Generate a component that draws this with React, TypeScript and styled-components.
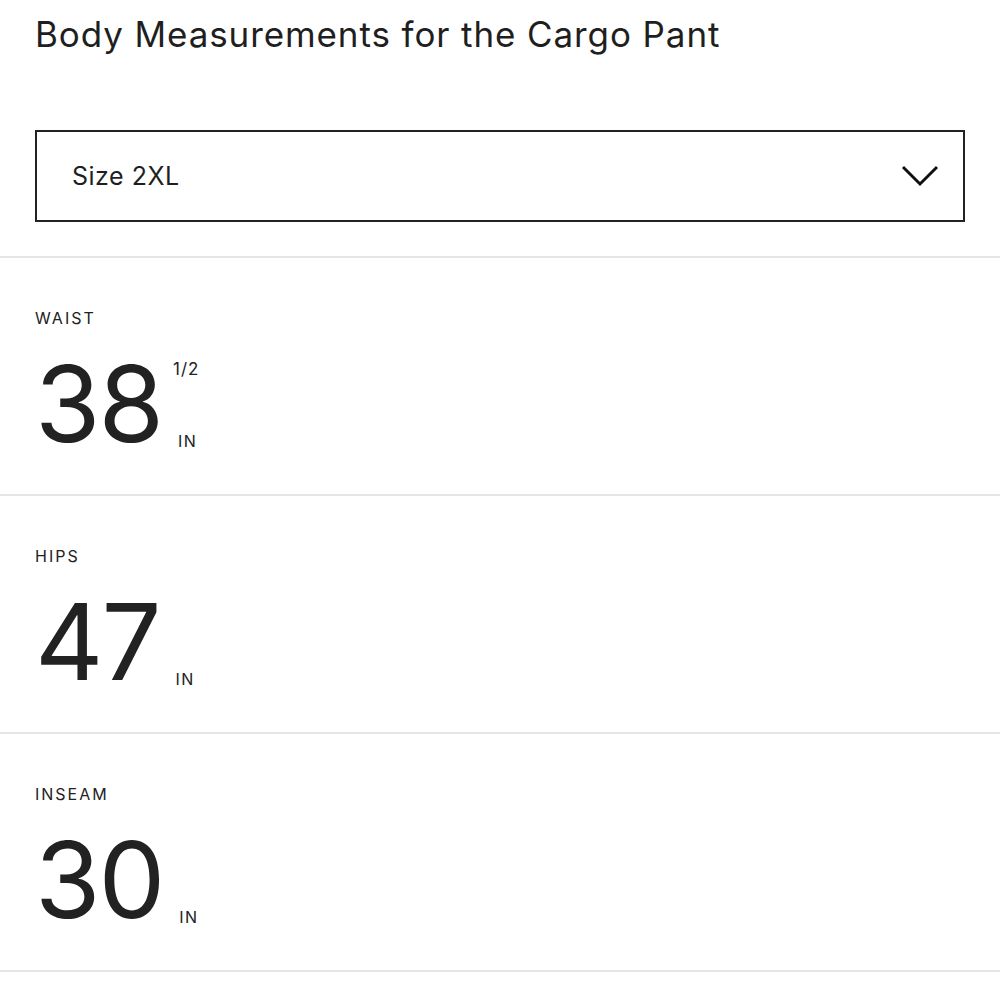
import React from "react";
import styled, { createGlobalStyle } from "styled-components";

const GlobalStyle = createGlobalStyle`
  html, body {
    margin: 0;
    padding: 0;
    background: #ffffff;
  }
  body {
    font-family: "Inter", "Liberation Sans", sans-serif;
    color: #1f1f1f;
  }
`;

const Page = styled.div`
  width: 1000px;
  display: flex;
  flex-direction: column;
`;

const Title = styled.h1`
  margin: 12px 0 0 35px;
  font-size: 35px;
  font-weight: 400;
  line-height: 44px;
  letter-spacing: 0.9px;
  color: #1f1f1f;
`;

const Select = styled.div`
  margin: 74px 35px 0 35px;
  height: 88px;
  border: 2px solid #222;
  display: flex;
  align-items: center;
  justify-content: space-between;
  padding: 0 24px 0 35px;
`;

const SelectLabel = styled.span`
  font-size: 25px;
  letter-spacing: 0.5px;
  color: #1f1f1f;
`;

const Spacer = styled.div`
  height: 34px;
`;

const Divider = styled.div`
  height: 2px;
  background: #e6e6e6;
`;

const Section = styled.section`
  padding: 50px 35px 0 35px;
  height: 236px;
  box-sizing: border-box;
  display: flex;
  flex-direction: column;
`;

const Label = styled.div`
  font-size: 16px;
  letter-spacing: 2px;
  text-transform: uppercase;
  color: #222;
`;

const Reading = styled.div`
  margin-top: 28px;
  display: flex;
  align-items: stretch;
`;

const Number = styled.span`
  font-size: 106px;
  line-height: 96px;
  letter-spacing: -2px;
  color: #222;
`;

const UnitColumn = styled.div`
  margin-left: 16px;
  display: flex;
  flex-direction: column;
  justify-content: space-between;
  padding-bottom: 2px;
`;

const Fraction = styled.span`
  margin: 4px 0 0 -5px;
  font-size: 17px;
  line-height: 18px;
  letter-spacing: 1px;
  color: #222;
`;

const Unit = styled.span`
  font-size: 16px;
  line-height: 18px;
  letter-spacing: 1.4px;
  color: #222;
`;

const Chevron = () => (
  <svg width="38" height="22" viewBox="0 0 38 22" fill="none">
    <path d="M2 2 L19 19 L36 2" stroke="#111" strokeWidth="3" />
  </svg>
);

type Measure = { label: string; value: string; fraction?: string };

const measures: Measure[] = [
  { label: "Waist", value: "38", fraction: "1/2" },
  { label: "Hips", value: "47" },
  { label: "Inseam", value: "30" },
];

export default function App() {
  return (
    <Page>
      <GlobalStyle />
      <Title>Body Measurements for the Cargo Pant</Title>
      <Select>
        <SelectLabel>Size 2XL</SelectLabel>
        <Chevron />
      </Select>
      <Spacer />
      <Divider />
      {measures.map((m) => (
        <React.Fragment key={m.label}>
          <Section>
            <Label>{m.label}</Label>
            <Reading>
              <Number>{m.value}</Number>
              <UnitColumn>
                <Fraction>{m.fraction ?? ""}</Fraction>
                <Unit>IN</Unit>
              </UnitColumn>
            </Reading>
          </Section>
          <Divider />
        </React.Fragment>
      ))}
    </Page>
  );
}
